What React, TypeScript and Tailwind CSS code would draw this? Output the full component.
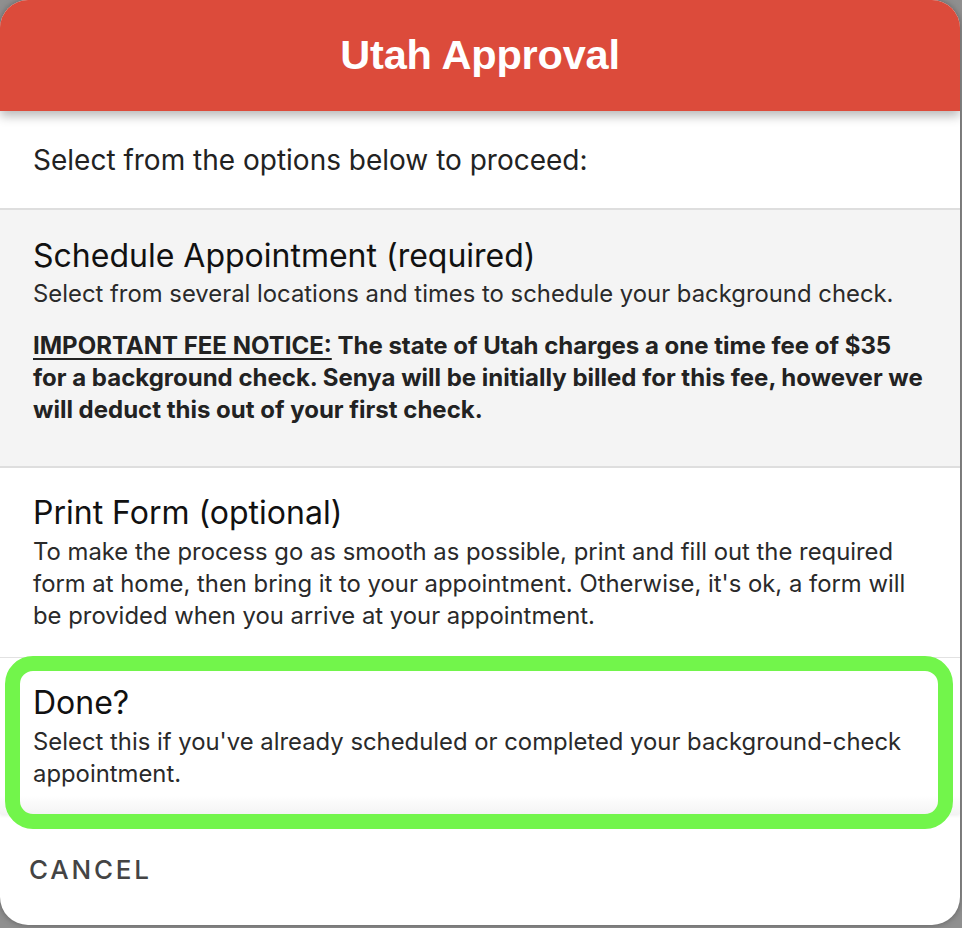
import React from 'react';

const inter = { fontFamily: 'Inter, "Noto Sans", sans-serif' };

const App = () => {
  return (
    <div className="w-[962px] h-[928px] bg-[#8f8f8f] overflow-hidden" style={inter}>
      {/* Modal */}
      <div className="w-[960px] h-[925px] bg-white rounded-[28px] overflow-hidden flex flex-col shadow-[0_0_6px_rgba(0,0,0,0.35)]">
        {/* Header */}
        <div className="relative z-10 h-[111px] shrink-0 bg-[#dc4b3b] flex items-center justify-center shadow-[0_5px_10px_rgba(0,0,0,0.28)]">
          <h1
            className="text-white text-[41.5px] font-bold tracking-[-0.2px]"
            style={{ fontFamily: '"Liberation Sans", Arial, sans-serif' }}
          >
            Utah Approval
          </h1>
        </div>

        {/* Intro */}
        <div className="h-[99px] shrink-0 flex items-center px-[33px] border-b-2 border-[#dedede]">
          <p className="text-[28px] text-[#222] leading-[32px]">Select from the options below to proceed:</p>
        </div>

        {/* Schedule */}
        <div className="bg-[#f4f4f4] px-[33px] pt-[25px] pb-[40px] border-b-2 border-[#dedede]">
          <h2 className="text-[32px] leading-[42px] text-[#111]">Schedule Appointment (required)</h2>
          <p className="mt-[1px] text-[23.85px] leading-[32px] text-[#2a2a2a]">
            Select from several locations and times to schedule your background check.
          </p>
          <p className="mt-[20px] text-[24px] leading-[32px] font-bold text-[#222]">
            <span className="underline underline-offset-[4px] decoration-2">IMPORTANT FEE NOTICE:</span> The state
            of Utah charges a one time fee of $35 for a background check. Senya will be initially billed for this
            fee, however we will deduct this out of your first check.
          </p>
        </div>

        {/* Print form */}
        <div className="px-[33px] pt-[24px] pb-[25px] border-b border-[#e2e2e2]">
          <h2 className="text-[32px] leading-[42px] text-[#111]">Print Form (optional)</h2>
          <p className="mt-[2px] text-[23.85px] leading-[32px] text-[#2a2a2a]">
            To make the process go as smooth as possible, print and fill out the required form at home, then bring it
            to your appointment. Otherwise, it's ok, a form will be provided when you arrive at your appointment.
          </p>
        </div>

        {/* Done */}
        <div className="relative px-[33px] pt-[24px] pb-[24px] bg-gradient-to-b from-white from-88% to-[#f4f4f4] shadow-[0_2px_3px_rgba(0,0,0,0.06)]">
          <h2 className="text-[32px] leading-[42px] text-[#111]">Done?</h2>
          <p className="mt-[2px] text-[23.85px] leading-[32px] text-[#2a2a2a]">
            Select this if you've already scheduled or completed your background-check appointment.
          </p>
          <div className="pointer-events-none absolute left-[5px] right-[7px] top-[-2px] bottom-[-15px] border-[15px] border-[#72f54b] rounded-[28px]" />
        </div>

        {/* Cancel */}
        <div className="flex-1 flex items-center px-[29px]">
          <button className="text-[26px] tracking-[2.8px] text-[#444] font-medium">CANCEL</button>
        </div>
      </div>
    </div>
  );
};

export default App;
